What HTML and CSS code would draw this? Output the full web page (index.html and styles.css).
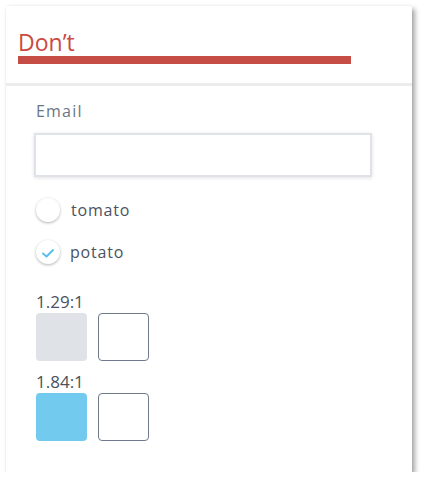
FILE: index.html
```html
<!DOCTYPE html>
<html>
<head>
<meta charset="utf-8">
<link rel="stylesheet" href="styles.css">
</head>
<body>
<div class="card">
  <div class="card-header">
    <h2 class="title">Don’t</h2>
    <div class="bar"></div>
  </div>
  <div class="card-body">
    <label class="field-label">Email</label>
    <div class="input"></div>
    <div class="options">
      <div class="option">
        <span class="radio"></span>
        <span class="option-text">tomato</span>
      </div>
      <div class="option">
        <span class="radio">
          <svg width="14" height="10" viewBox="0 0 14 10"><path d="M2 5.5 L5.5 8.5 L12 2" fill="none" stroke="#5bc0ee" stroke-width="2" stroke-linecap="round" stroke-linejoin="round"/></svg>
        </span>
        <span class="option-text potato">potato</span>
      </div>
    </div>
    <div class="ratio">
      <div class="ratio-label">1.29:1</div>
      <div class="swatches">
        <div class="swatch gray"></div>
        <div class="swatch outline"></div>
      </div>
    </div>
    <div class="ratio">
      <div class="ratio-label">1.84:1</div>
      <div class="swatches">
        <div class="swatch blue"></div>
        <div class="swatch outline"></div>
      </div>
    </div>
  </div>
</div>
</body>
</html>
```
FILE: styles.css
```css
html, body {
  margin: 0;
  padding: 0;
  background: #ffffff;
}
body {
  font-family: "Open Sans", "Noto Sans", sans-serif;
}
.card {
  margin: 6px 0 0 6px;
  width: 406px;
  height: 466px;
  background: #fff;
  box-shadow: 3px 3px 5px rgba(0, 0, 0, 0.35), 0 0 2px rgba(0,0,0,0.08);
  box-sizing: border-box;
}
.card-header {
  box-sizing: border-box;
  padding: 22px 0 0 12px;
  height: 80px;
  border-bottom: 3px solid #ececec;
}
.title {
  margin: 0;
  font-size: 23px;
  font-weight: 400;
  line-height: 28px;
  color: #c94b45;
}
.bar {
  margin-top: 0;
  width: 333px;
  height: 8px;
  background: #c64c46;
}
.card-body {
  padding: 15px 0 0 30px;
}
.field-label {
  display: block;
  font-size: 16px;
  letter-spacing: 1.2px;
  color: #6b7585;
  line-height: 20px;
}
.input {
  margin-top: 12px;
  margin-left: -2px;
  width: 334px;
  height: 40px;
  border: 2px solid #dfe3e8;
  box-shadow: 0 1px 4px rgba(0, 0, 0, 0.12);
  background: #fff;
}
.options {
  margin-top: 21px;
  display: flex;
  flex-direction: column;
  gap: 18px;
}
.option {
  display: flex;
  align-items: center;
  height: 24px;
}
.radio {
  width: 24px;
  height: 24px;
  border-radius: 50%;
  background: #fff;
  box-shadow: 0 1px 3px rgba(0, 0, 0, 0.3);
  display: flex;
  align-items: center;
  justify-content: center;
  flex: none;
}
.radio svg {
  margin-top: 2px;
}
.option-text {
  margin-left: 11px;
  font-size: 16px;
  letter-spacing: 0.8px;
  color: #4b5260;
}
.option-text.potato {
  margin-left: 10px;
}
.ratio {
  margin-top: 28px;
}
.ratio + .ratio {
  margin-top: 11px;
}
.ratio-label {
  font-size: 17px;
  line-height: 20px;
  color: #4b5260;
}
.swatches {
  margin-top: 1px;
  display: flex;
  gap: 11px;
}
.swatch {
  width: 51px;
  height: 48px;
  border-radius: 4px;
  box-sizing: border-box;
}
.gray {
  background: #dfe2e6;
}
.blue {
  background: #72caef;
}
.outline {
  border: 1px solid #6f7b8c;
  background: #fff;
}
```
